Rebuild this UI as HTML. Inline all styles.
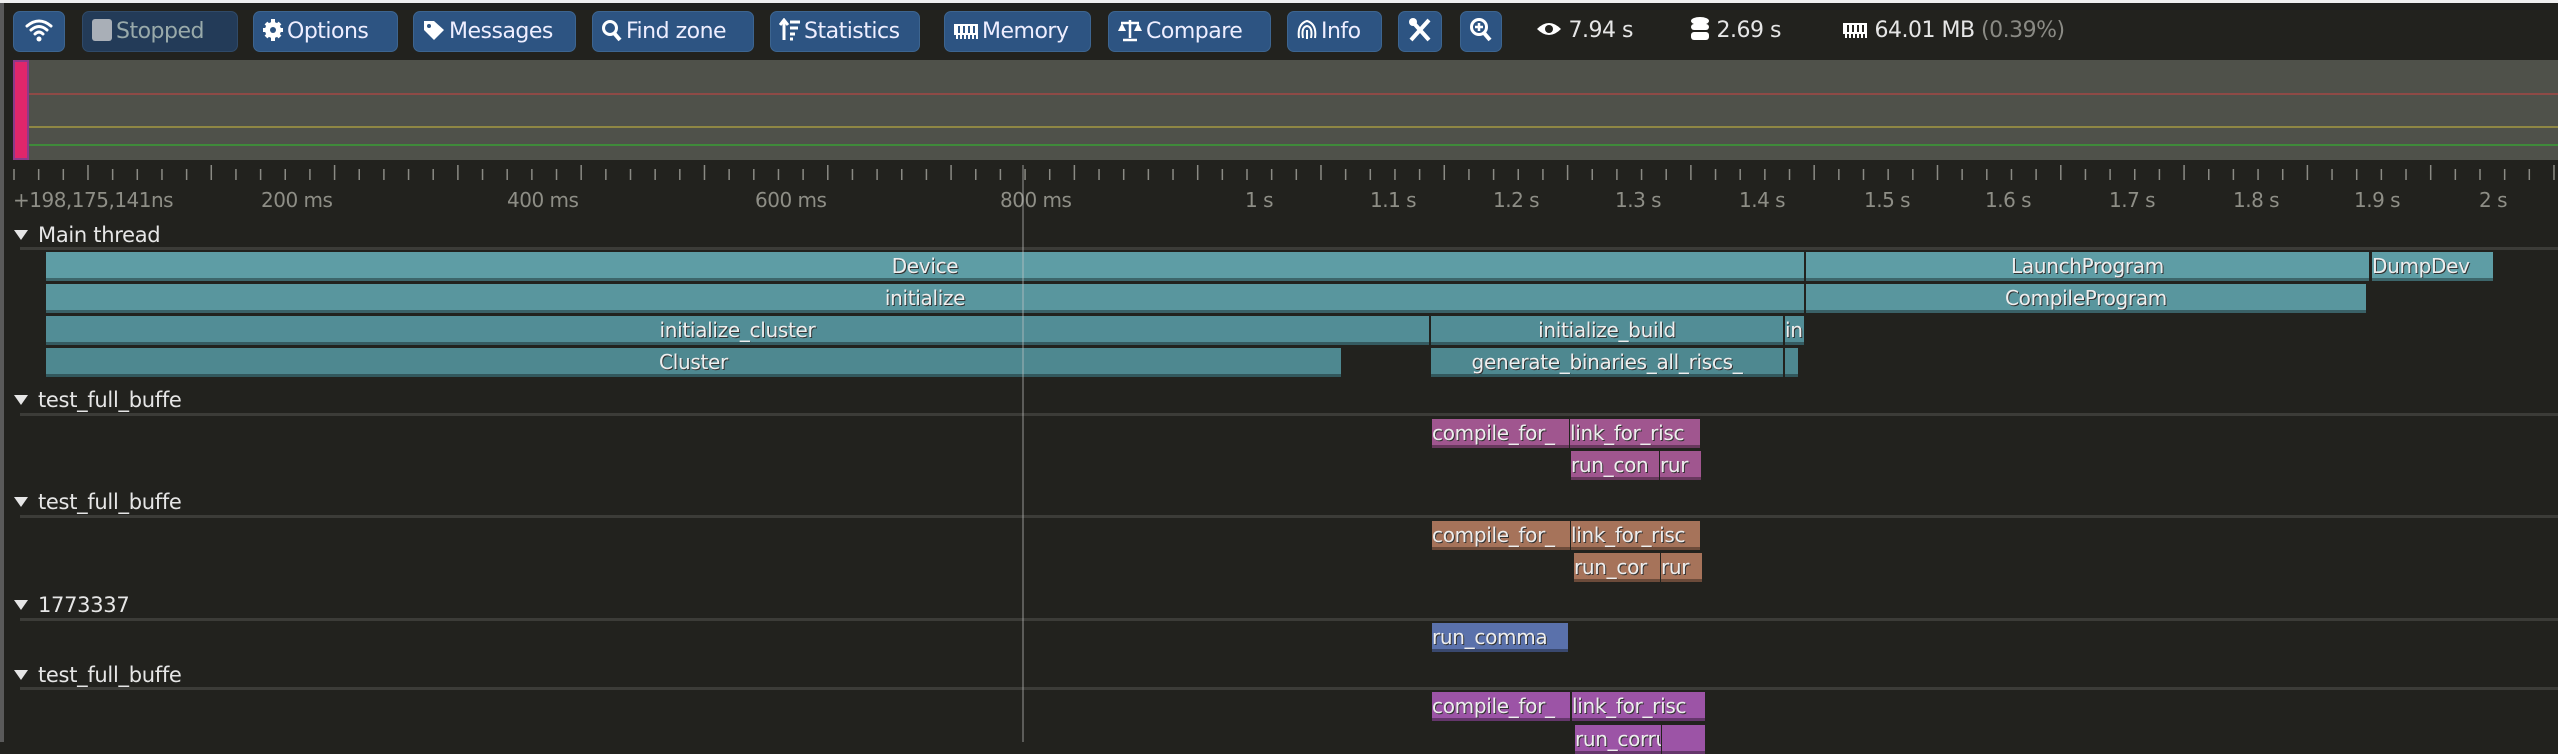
<!DOCTYPE html><html><head><meta charset="utf-8"><style>
*{margin:0;padding:0;box-sizing:border-box}
body{width:2558px;height:742px;background:#22221e;position:relative;overflow:hidden;font-family:"DejaVu Sans","Liberation Sans",sans-serif;color:#e6e6e6}
.a{position:absolute}
.btn{position:absolute;top:11px;height:41px;background:#2d5482;border:1px solid #3d6590;border-radius:7px;font-size:22px;line-height:39px;color:#eef;white-space:nowrap;letter-spacing:-0.5px;padding-left:8px}
.btn svg{vertical-align:middle;margin-top:-4px;margin-right:3px}
.st{position:absolute;top:11px;font-size:22px;line-height:39px;white-space:nowrap;letter-spacing:-0.5px}
.lbl{position:absolute;top:188px;font-size:20px;color:#8e8e86;letter-spacing:-0.5px;white-space:nowrap}
.z{position:absolute;height:29px;font-size:20px;line-height:28px;text-align:center;color:#eee;white-space:nowrap;overflow:hidden;border-bottom:3px solid rgba(0,0,0,.35);text-shadow:1px 1px 0 #333;letter-spacing:-0.3px}
.th{position:absolute;left:14px;font-size:21px;color:#e6e6e6;white-space:nowrap;letter-spacing:-0.3px}
.th:before{content:"";display:inline-block;border-left:7px solid transparent;border-right:7px solid transparent;border-top:10px solid #e6e6e6;margin-right:10px;vertical-align:middle;margin-top:-3px}
.sep{position:absolute;left:20px;right:0;height:3px;background:#3c3c38}
</style></head><body>
<div class="a" style="left:0;top:0;width:2558px;height:3px;background:#f0f0f0"></div>
<div class="a" style="left:0;top:3px;width:4px;height:739px;background:#5a5a5a"></div>
<div class="btn" style="left:13px;width:52px;padding-left:10px"><svg width="30" height="26" viewBox="0 0 30 26"><path d="M3 9 Q15 -1 27 9 M7 13 Q15 6 23 13 M11 17 Q15 13 19 17" stroke="#fff" stroke-width="3" fill="none" stroke-linecap="round"/><circle cx="15" cy="22" r="2.5" fill="#fff"/></svg></div>
<div class="btn" style="left:82px;width:156px;background:#233b58;border-color:#304a68;color:#9aa"><svg width="22" height="24"><rect x="1" y="1" width="20" height="22" rx="3" fill="#a9afb7"/></svg>Stopped</div>
<div class="btn" style="left:253px;width:145px"><svg width="22" height="24" viewBox="0 0 22 24"><circle cx="11" cy="12" r="8" fill="#fff"/><path d="M11 1v22M1 12h20M4 5l14 14M18 5L4 19" stroke="#fff" stroke-width="4"/><circle cx="11" cy="12" r="3" fill="#2d5482"/></svg>Options</div>
<div class="btn" style="left:413px;width:163px"><svg width="24" height="24"><path d="M2 3h10l10 9-10 10L2 12z" fill="#fff"/><circle cx="7" cy="8" r="2" fill="#2d5482"/></svg>Messages</div>
<div class="btn" style="left:592px;width:162px"><svg width="22" height="24"><circle cx="9" cy="10" r="6.5" stroke="#fff" stroke-width="3" fill="none"/><path d="M13 15l6 7" stroke="#fff" stroke-width="4"/></svg>Find zone</div>
<div class="btn" style="left:770px;width:150px"><svg width="22" height="24"><path d="M5 22V3M1 7l4-5 4 5" stroke="#fff" stroke-width="3" fill="none"/><path d="M11 4h10M11 10h8M11 16h5M11 21h3" stroke="#fff" stroke-width="3"/></svg>Statistics</div>
<div class="btn" style="left:944px;width:147px"><svg width="26" height="24"><rect x="1" y="6" width="24" height="11" fill="#fff"/><path d="M4 17v4M8 17v4M12 17v4M16 17v4M20 17v4M24 17v4" stroke="#fff" stroke-width="2"/><path d="M6 8v7M11 8v7M16 8v7M21 8v7" stroke="#2d5482" stroke-width="2"/></svg>Memory</div>
<div class="btn" style="left:1108px;width:163px"><svg width="26" height="24"><path d="M13 2v18M4 5h18M6 22h14" stroke="#fff" stroke-width="2.5"/><path d="M1 13l4-8 4 8zM17 13l4-8 4 8z" fill="#fff"/></svg>Compare</div>
<div class="btn" style="left:1287px;width:95px"><svg width="22" height="24"><path d="M3 20Q1 6 11 3Q21 6 19 20M7 20Q5 9 11 8Q17 9 15 20M11 12v9" stroke="#fff" stroke-width="2" fill="none"/></svg>Info</div>
<div class="btn" style="left:1398px;width:44px;padding-left:9px"><svg width="24" height="26"><path d="M3 3l18 20M21 3L3 23" stroke="#fff" stroke-width="4"/><circle cx="5" cy="5" r="4" fill="#fff"/></svg></div>
<div class="btn" style="left:1460px;width:42px;padding-left:8px"><svg width="24" height="26"><circle cx="10" cy="10" r="7.5" stroke="#fff" stroke-width="3" fill="none"/><path d="M10 6v8M6 10h8" stroke="#fff" stroke-width="2.5"/><path d="M15 16l6 7" stroke="#fff" stroke-width="4"/></svg></div>
<div class="st" style="left:1536px"><svg width="26" height="24" style="vertical-align:middle;margin-top:-4px"><path d="M1 12Q13 0 25 12Q13 24 1 12z" fill="#fff"/><circle cx="13" cy="12" r="4" fill="#22221e"/></svg> 7.94 s</div>
<div class="st" style="left:1690px"><svg width="20" height="26" style="vertical-align:middle;margin-top:-4px"><ellipse cx="10" cy="5" rx="9" ry="4" fill="#fff"/><rect x="1" y="8" width="18" height="6" rx="3" fill="#fff"/><rect x="1" y="16" width="18" height="8" rx="3" fill="#fff"/></svg> 2.69 s</div>
<div class="st" style="left:1842px"><svg width="26" height="24" style="vertical-align:middle;margin-top:-4px"><rect x="1" y="6" width="24" height="11" fill="#fff"/><path d="M4 17v4M8 17v4M12 17v4M16 17v4M20 17v4M24 17v4" stroke="#fff" stroke-width="2"/><path d="M6 8v7M11 8v7M16 8v7M21 8v7" stroke="#22221e" stroke-width="2"/></svg> 64.01 MB <span style="color:#8a8a84">(0.39%)</span></div>

<div class="a" style="left:13px;top:60px;width:2545px;height:100px;background:#4f514a"></div>
<div class="a" style="left:13px;top:93px;width:2545px;height:2px;background:#8e4a46"></div>
<div class="a" style="left:13px;top:126px;width:2545px;height:2px;background:#8f8744"></div>
<div class="a" style="left:13px;top:144px;width:2545px;height:2px;background:#3f8a3a"></div>
<div class="a" style="left:13px;top:60px;width:16px;height:100px;background:#e0266b;border:2px solid #8a3a8a"></div>

<svg class="a" style="left:0;top:163px" width="2558" height="20">
<g id="ticks"></g>
</svg>
<script>
var g=document.getElementById('ticks'),s='';
for(var i=-2;i<110;i++){var x=14+i*24.66;if(x<12||x>2558)continue;var big=((i+200)%5==3);s+='<line x1="'+x+'" x2="'+x+'" y1="'+(big?2:6)+'" y2="17" stroke="#8a8a84" stroke-width="1.5"/>';}
g.innerHTML=s;
</script>
<div class="lbl" style="left:13px">+198,175,141ns</div>
<div class="lbl" style="left:261px">200 ms</div>
<div class="lbl" style="left:507px">400 ms</div>
<div class="lbl" style="left:755px">600 ms</div>
<div class="lbl" style="left:1000px">800 ms</div>
<div class="lbl" style="left:1245px">1 s</div>
<div class="lbl" style="left:1370px">1.1 s</div>
<div class="lbl" style="left:1493px">1.2 s</div>
<div class="lbl" style="left:1615px">1.3 s</div>
<div class="lbl" style="left:1739px">1.4 s</div>
<div class="lbl" style="left:1864px">1.5 s</div>
<div class="lbl" style="left:1985px">1.6 s</div>
<div class="lbl" style="left:2109px">1.7 s</div>
<div class="lbl" style="left:2233px">1.8 s</div>
<div class="lbl" style="left:2354px">1.9 s</div>
<div class="lbl" style="left:2479px">2 s</div>

<div class="th" style="top:223px">Main thread</div>
<div class="sep" style="top:247px"></div>
<div class="z" style="left:46px;top:252px;width:1758px;background:#5e9da5">Device</div>
<div class="z" style="left:1806px;top:252px;width:563px;background:#5e9da5">LaunchProgram</div>
<div class="z" style="left:2372px;top:252px;width:121px;background:#5e9da5;text-align:left">DumpDev</div>
<div class="z" style="left:46px;top:284px;width:1758px;background:#59969e">initialize</div>
<div class="z" style="left:1806px;top:284px;width:560px;background:#59969e">CompileProgram</div>
<div class="z" style="left:46px;top:316px;width:1383px;background:#528d96">initialize_cluster</div>
<div class="z" style="left:1431px;top:316px;width:352px;background:#528d96">initialize_build</div>
<div class="z" style="left:1785px;top:316px;width:19px;background:#528d96;text-align:left">in</div>
<div class="z" style="left:46px;top:348px;width:1295px;background:#4e8890">Cluster</div>
<div class="z" style="left:1431px;top:348px;width:352px;background:#4e8890">generate_binaries_all_riscs_</div>
<div class="z" style="left:1785px;top:348px;width:13px;background:#4e8890"></div>

<div class="th" style="top:388px">test_full_buffe</div>
<div class="sep" style="top:413px"></div>
<div class="z" style="left:1432px;top:419px;width:137px;background:#a0568f;text-align:left">compile_for_</div>
<div class="z" style="left:1570px;top:419px;width:130px;background:#a0568f;text-align:left">link_for_risc</div>
<div class="z" style="left:1571px;top:451px;width:88px;background:#a0568f;text-align:left">run_con</div>
<div class="z" style="left:1660px;top:451px;width:41px;background:#a0568f;text-align:left">rur</div>

<div class="th" style="top:490px">test_full_buffe</div>
<div class="sep" style="top:515px"></div>
<div class="z" style="left:1432px;top:521px;width:138px;background:#a6735a;text-align:left">compile_for_</div>
<div class="z" style="left:1571px;top:521px;width:129px;background:#a6735a;text-align:left">link_for_risc</div>
<div class="z" style="left:1574px;top:553px;width:86px;background:#a6735a;text-align:left">run_cor</div>
<div class="z" style="left:1661px;top:553px;width:41px;background:#a6735a;text-align:left">rur</div>

<div class="th" style="top:593px">1773337</div>
<div class="sep" style="top:618px"></div>
<div class="z" style="left:1432px;top:623px;width:136px;background:#5a71ab;text-align:left">run_comma</div>

<div class="th" style="top:663px">test_full_buffe</div>
<div class="sep" style="top:687px"></div>
<div class="z" style="left:1432px;top:692px;width:138px;background:#9c54a6;text-align:left">compile_for_</div>
<div class="z" style="left:1572px;top:692px;width:133px;background:#9c54a6;text-align:left">link_for_risc</div>
<div class="z" style="left:1575px;top:725px;width:86px;background:#9c54a6;text-align:left">run_corru</div>
<div class="z" style="left:1662px;top:725px;width:43px;background:#9c54a6"></div>

<div class="a" style="left:1022px;top:165px;width:2px;height:577px;background:rgba(200,200,200,.35)"></div>
</body></html>
